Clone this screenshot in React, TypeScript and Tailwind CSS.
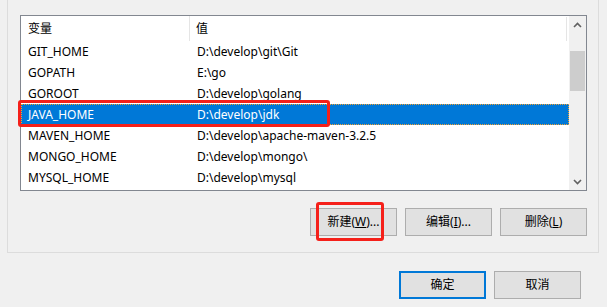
import React from "react";

type Row = { name: string; value: string };

const rows: Row[] = [
  { name: "GIT_HOME", value: "D:\\develop\\git\\Git" },
  { name: "GOPATH", value: "E:\\go" },
  { name: "GOROOT", value: "D:\\develop\\golang" },
  { name: "JAVA_HOME", value: "D:\\develop\\jdk" },
  { name: "MAVEN_HOME", value: "D:\\develop\\apache-maven-3.2.5" },
  { name: "MONGO_HOME", value: "D:\\develop\\mongo\\" },
  { name: "MYSQL_HOME", value: "D:\\develop\\mysql" },
  { name: "NODE_HOME", value: "D:\\develop\\nodejs" },
];

const font = { fontFamily: '"Noto Sans", "Noto Sans CJK SC", sans-serif' };

function Btn({
  children,
  primary,
}: {
  children: React.ReactNode;
  primary?: boolean;
}) {
  return (
    <div
      className={
        "flex h-[28px] w-[87px] items-center justify-center bg-[#e1e1e1] text-[12px] text-black " +
        (primary ? "border-2 border-[#0078d7]" : "border border-[#adadad]")
      }
    >
      {children}
    </div>
  );
}

export default function App() {
  return (
    <div
      className="relative h-[307px] w-[607px] overflow-hidden bg-[#f0f0f0]"
      style={font}
    >
      {/* group box */}
      <div className="relative ml-[7px] mt-[-6px] h-[259px] w-[592px] border border-[#dcdcdc]">
        <div className="absolute left-[6px] top-[-12px] bg-[#f0f0f0] px-[2px] text-[12px] leading-[16px] text-black">
          系统变量(<span className="underline">S</span>)
        </div>

        <div className="ml-[12px] mt-[20px] flex h-[176px] w-[567px] border border-[#828790] bg-white">
          <div className="flex w-[548px] flex-col overflow-hidden">
            <div className="flex h-[25px] shrink-0 items-center text-[12px] text-black">
              <div className="flex h-full w-[169px] items-center border-r border-[#e5e5e5] pl-[7px]">
                变量
              </div>
              <div className="flex h-[24px] w-[377px] items-center border-r border-[#e5e5e5] pl-[6px]">
                值
              </div>
            </div>
            {rows.map((r) => {
              const sel = r.name === "JAVA_HOME";
              return (
                <div
                  key={r.name}
                  className={
                    "flex h-[21px] shrink-0 items-center text-[12px] " +
                    (sel
                      ? "border border-dotted border-[#f0a030] bg-[#0078d7] text-white"
                      : "border border-transparent text-black")
                  }
                >
                  <div className="w-[169px] pl-[6px]">{r.name}</div>
                  <div className="pl-[6px]">{r.value}</div>
                </div>
              );
            })}
          </div>

          {/* scrollbar */}
          <div className="flex w-[17px] flex-col bg-[#f0f0f0]">
            <div className="flex h-[17px] items-center justify-center">
              <svg width="9" height="6" viewBox="0 0 9 6">
                <path d="M1 5 L4.5 1.5 L8 5" stroke="#606060" strokeWidth="1.6" fill="none" />
              </svg>
            </div>
            <div className="mx-[1px] mt-[18px] h-[40px] bg-[#cdcdcd]" />
            <div className="flex-1" />
            <div className="flex h-[17px] items-center justify-center">
              <svg width="9" height="6" viewBox="0 0 9 6">
                <path d="M1 1 L4.5 4.5 L8 1" stroke="#606060" strokeWidth="1.6" fill="none" />
              </svg>
            </div>
          </div>
        </div>

        <div className="mt-[17px] flex w-[579px] justify-end gap-[8px]">
          <Btn>
            新建(<span className="underline">W</span>)...
          </Btn>
          <Btn>
            编辑(<span className="underline">I</span>)...
          </Btn>
          <Btn>
            删除(<span className="underline">L</span>)
          </Btn>
        </div>
      </div>

      <div className="mt-[18px] flex w-[581px] justify-end gap-[8px]">
        <Btn primary>确定</Btn>
        <Btn>取消</Btn>
      </div>

      {/* red annotation boxes */}
      <div className="absolute left-[18px] top-[100px] h-[27px] w-[312px] rounded-[3px] border-[3px] border-[#f5201a]" />
      <div className="absolute left-[316px] top-[202px] h-[39px] w-[68px] rounded-[3px] border-[3px] border-[#f5201a]" />
    </div>
  );
}
